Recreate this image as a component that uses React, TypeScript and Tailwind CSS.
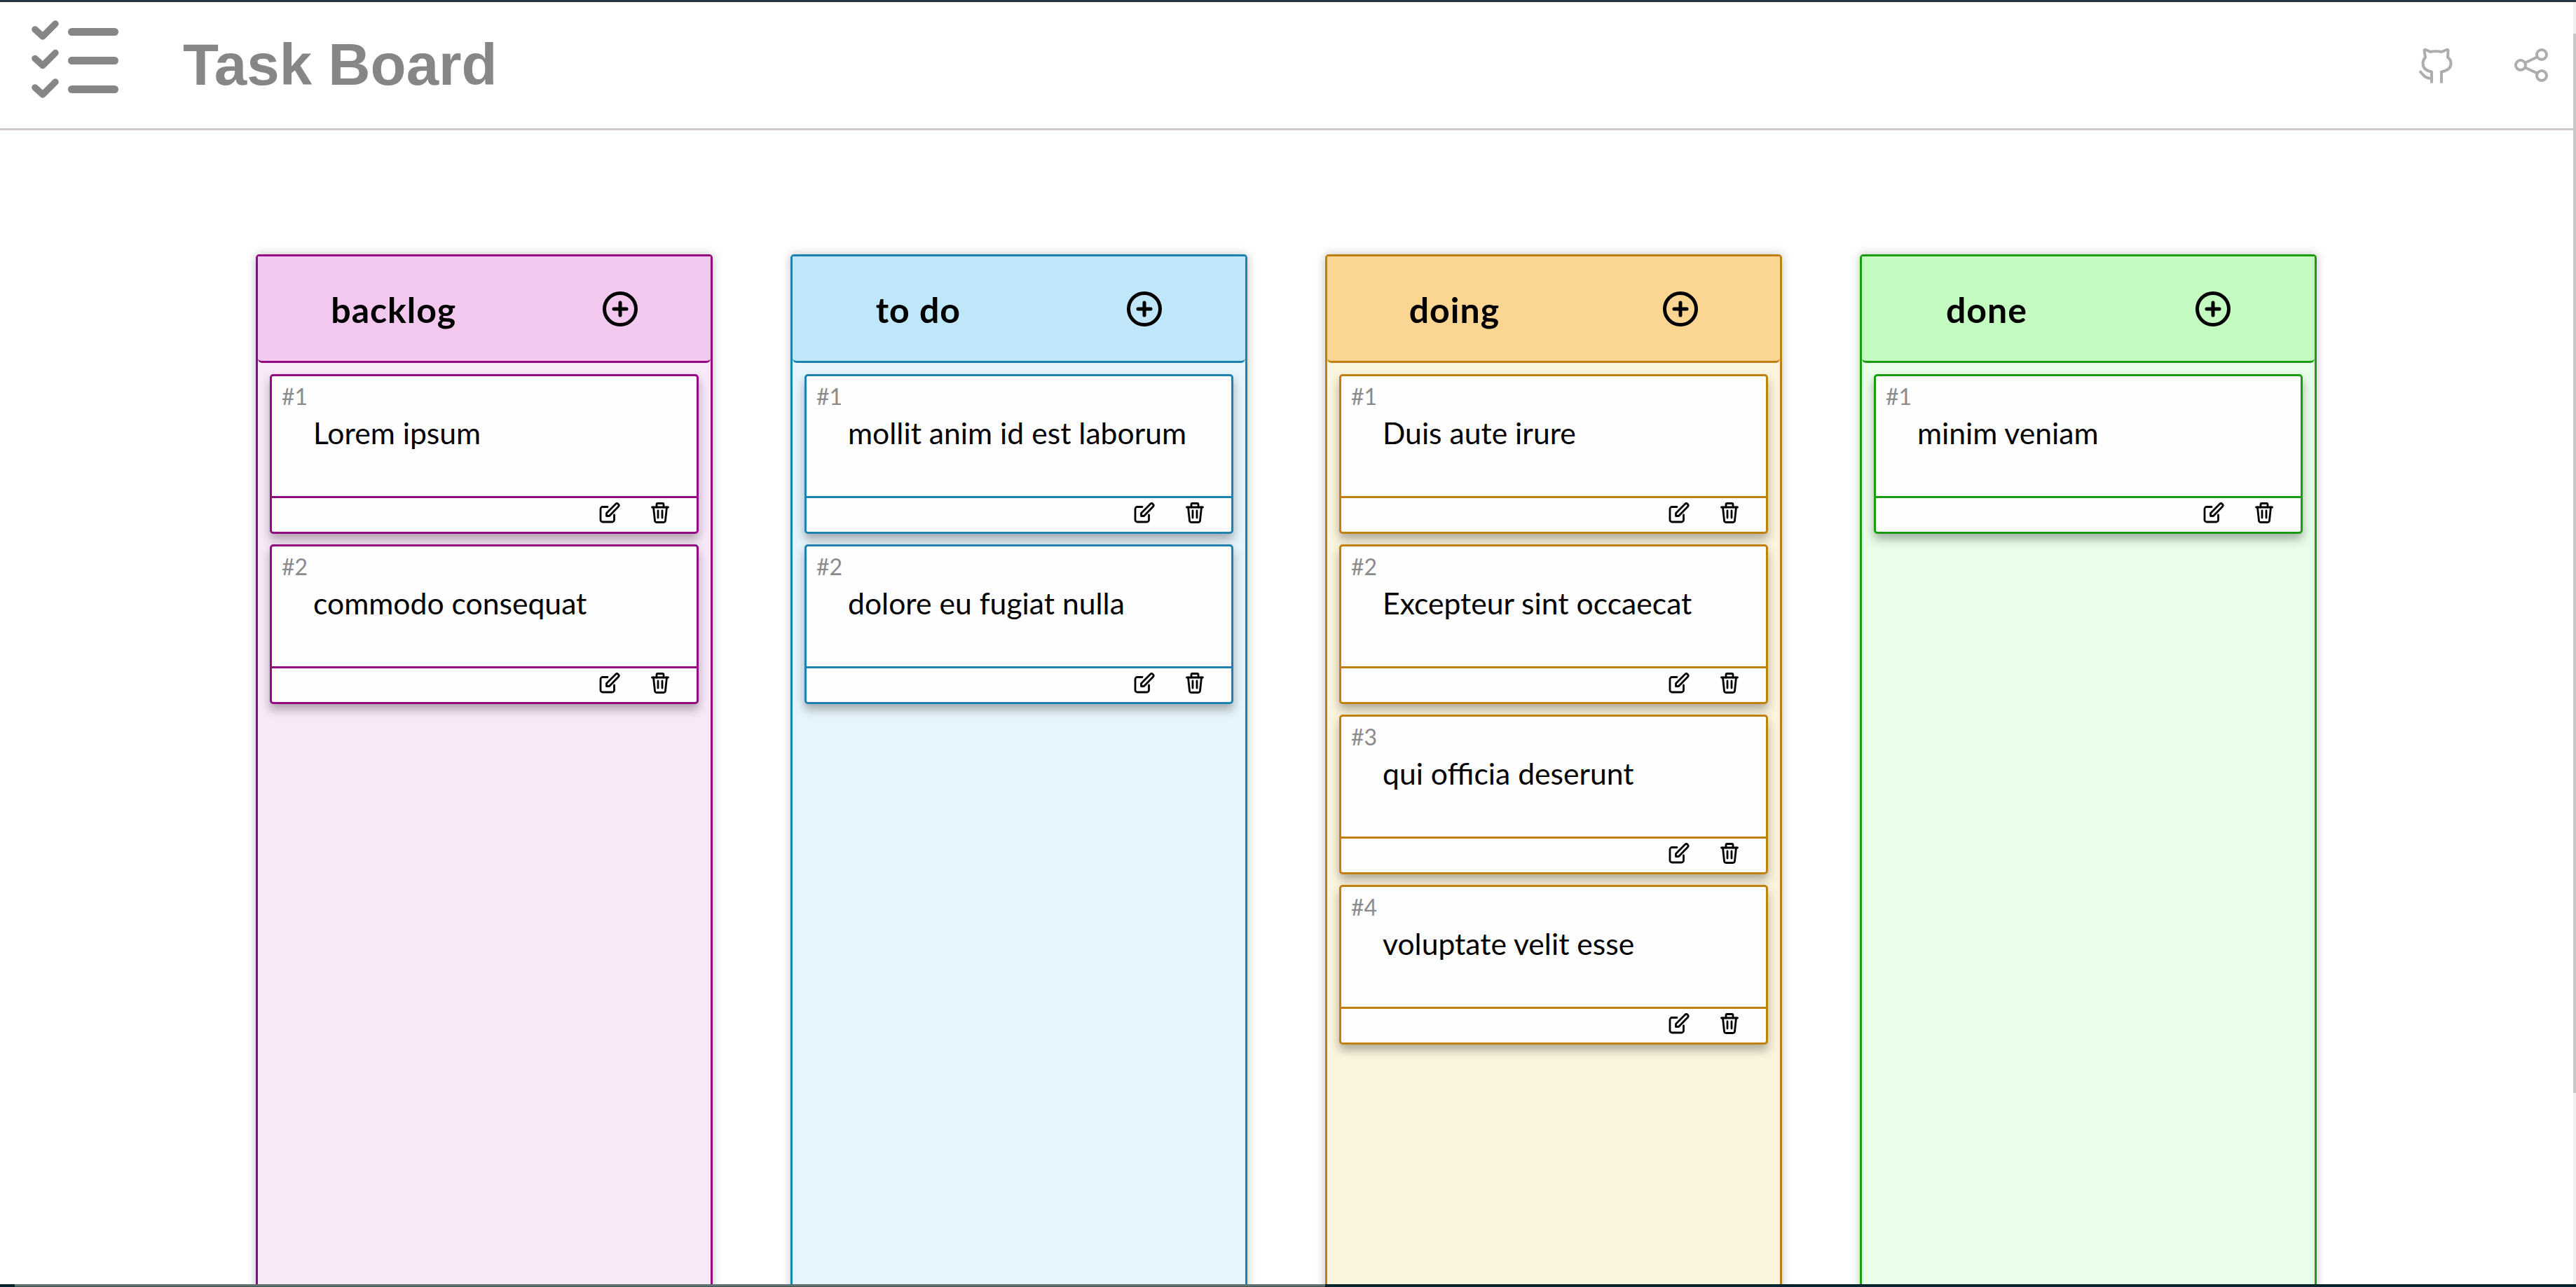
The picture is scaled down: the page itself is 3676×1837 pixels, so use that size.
const columns = [
  {
    title: "backlog",
    box: "border-[#930a80] bg-[#f9e8f8] shadow-[0_0_14px_rgba(0,0,0,0.25)]",
    head: "border-[#930a80] bg-[#f2c8ee]",
    card: "border-[#930a80]",
    line: "border-[#930a80]",
    tasks: ["Lorem ipsum", "commodo consequat"],
  },
  {
    title: "to do",
    box: "border-[#1e82b0] bg-[#e6f4fb] shadow-[0_0_14px_rgba(0,0,0,0.25)]",
    head: "border-[#1e82b0] bg-[#c0e7f9]",
    card: "border-[#1e82b0]",
    line: "border-[#1e82b0]",
    tasks: ["mollit anim id est laborum", "dolore eu fugiat nulla"],
  },
  {
    title: "doing",
    box: "border-[#c0800f] bg-[#fbf4de] shadow-[0_0_14px_rgba(0,0,0,0.25)]",
    head: "border-[#c0800f] bg-[#fbd692]",
    card: "border-[#c0800f]",
    line: "border-[#c0800f]",
    tasks: ["Duis aute irure", "Excepteur sint occaecat", "qui officia deserunt", "voluptate velit esse"],
  },
  {
    title: "done",
    box: "border-[#1a9c10] bg-[#e9fee8] shadow-[0_0_14px_rgba(0,0,0,0.25)]",
    head: "border-[#1a9c10] bg-[#c4fbc0]",
    card: "border-[#1a9c10]",
    line: "border-[#1a9c10]",
    tasks: ["minim veniam"],
  },
];

function Logo() {
  return (
    <svg width="130" height="138" viewBox="0 0 130 138" fill="none" stroke="#858687" strokeLinecap="round" strokeLinejoin="round">
      <path d="M8 18L19 28L37 10" strokeWidth="9.5" />
      <path d="M8 59.5L19 69.5L37 51.5" strokeWidth="9.5" />
      <path d="M8 101L19 111L37 93" strokeWidth="9.5" />
      <path d="M60.5 21.5H121.5" strokeWidth="11" />
      <path d="M60.5 62.5H121.5" strokeWidth="11" />
      <path d="M60.5 103.5H121.5" strokeWidth="11" />
    </svg>
  );
}

function GithubIcon() {
  return (
    <svg width="52" height="54" viewBox="0 0 52 54" fill="none" stroke="#adadad" strokeWidth="4" strokeLinecap="round" strokeLinejoin="round">
      <path d="M20 51V36.5C12 35 7.5 31 7.5 24.5C7.5 21 9 18 11 16L9.5 6C9.5 5 10.5 4.5 11.5 5L18 8C22 7 30 7 34 8L41.5 5C42.5 4.5 43.5 5 43.5 6L43 16C46 18 47.5 21 47.5 24.5C47.5 31 42 35 34 36.5V51" />
      <path d="M4 36.5C9 42 11 46 20 46" />
    </svg>
  );
}

function ShareIcon() {
  return (
    <svg width="48" height="48" viewBox="0 0 48 48" fill="none" stroke="#adadad" strokeWidth="4">
      <circle cx="39" cy="9" r="7" />
      <circle cx="9" cy="24" r="7" />
      <circle cx="39" cy="39" r="7" />
      <path d="M15.5 20.5L32.5 12.5M15.5 27.5L32.5 35.5" />
    </svg>
  );
}

function AddIcon() {
  return (
    <svg width="50" height="50" viewBox="0 0 50 50" fill="none" stroke="#000" strokeWidth="5" strokeLinecap="round">
      <circle cx="25" cy="25" r="22.5" />
      <path d="M16 25H34M25 16V34" />
    </svg>
  );
}

function EditIcon() {
  return (
    <svg width="30" height="30" viewBox="0 0 30 30" fill="none" stroke="#000" strokeWidth="2.8" strokeLinecap="round" strokeLinejoin="round">
      <path d="M12 6.5H5A3 3 0 0 0 2 9.5V25A3 3 0 0 0 5 28H18.5A3 3 0 0 0 21.5 25V18" />
      <path d="M10.5 19.5V15.5L23.5 2.5A2.6 2.6 0 0 1 27.3 6.2L14.5 19.5Z" />
    </svg>
  );
}

function TrashIcon() {
  return (
    <svg width="26" height="30" viewBox="0 0 26 30" fill="none" stroke="#000" strokeWidth="2.8" strokeLinecap="round" strokeLinejoin="round">
      <path d="M1.5 7H24.5" />
      <path d="M8 7V3A1.5 1.5 0 0 1 9.5 1.5H16.5A1.5 1.5 0 0 1 18 3V7" />
      <path d="M3.5 7L5.5 26A2.5 2.5 0 0 0 8 28.5H18A2.5 2.5 0 0 0 20.5 26L22.5 7" />
      <path d="M10 12V22M16 12V22" />
    </svg>
  );
}

function TaskCard({ index, text, card, line }: { index: number; text: string; card: string; line: string }) {
  return (
    <div className={`flex h-[228px] flex-col rounded-[5px] border-[3px] bg-[#fefefe] shadow-[0_8px_14px_rgba(0,0,0,0.3)] ${card}`}>
      <div className="h-[171px] pl-[14px] pt-[9px]">
        <p className="text-[32px] leading-[40px] text-[#8b8b8b]">#{index}</p>
        <p className="pl-[45px] pt-[3px] text-[42.67px] leading-[58px] text-black">{text}</p>
      </div>
      <div className={`flex flex-1 items-center justify-end gap-[44px] border-t-[3px] pb-[6px] pr-[39px] ${line}`}>
        <EditIcon />
        <TrashIcon />
      </div>
    </div>
  );
}

function Column({ column }: { column: (typeof columns)[number] }) {
  return (
    <section className={`h-[1600px] w-[652px] shrink-0 rounded-[5px] border-[3px] ${column.box}`}>
      <header className={`flex h-[152px] items-center justify-around rounded-b-[6px] border-b-[3px] ${column.head}`}>
        <h2 className="pt-[2px] text-[50px] font-bold leading-[60px] tracking-[1px] text-black">{column.title}</h2>
        <button>
          <AddIcon />
        </button>
      </header>
      <div className="flex flex-col gap-[15px] px-[17px] pt-[16px]">
        {column.tasks.map((text, i) => (
          <TaskCard key={text} index={i + 1} text={text} card={column.card} line={column.line} />
        ))}
      </div>
    </section>
  );
}

export default function App() {
  return (
    <div className="flex h-screen flex-col overflow-hidden bg-white font-['Lato',sans-serif]">
      <div className="h-[3px] shrink-0 bg-[#26353f]" />
      <div className="flex min-h-0 flex-1">
        <div className="flex min-w-0 flex-1 flex-col">
          <nav className="flex h-[183px] shrink-0 items-center border-b-[3px] border-[#cfc7c7] pl-[42px] pr-[36px]">
            <Logo />
            <h1 className="ml-[89px] font-['Liberation_Sans',sans-serif] text-[83.5px] font-bold leading-none text-[#858687]">
              Task Board
            </h1>
            <div className="ml-auto flex items-center gap-[86px]">
              <GithubIcon />
              <ShareIcon />
            </div>
          </nav>
          <main className="flex min-h-0 flex-1 gap-[111px] overflow-hidden pl-[365px] pt-[177px]">
            {columns.map((column) => (
              <Column key={column.title} column={column} />
            ))}
          </main>
        </div>
        <aside className="flex w-[4px] shrink-0 flex-col bg-[#f0f0f0]">
          <div className="h-[45px]" />
          <div className="h-[1512px] bg-[#c8c8c8]" />
        </aside>
      </div>
      <footer className="flex h-[4px] shrink-0 bg-[#07232d]">
        <div className="w-[21px]" />
        <div className="w-[1870px] border-b border-[#3f5553] bg-[#5f7270]" />
      </footer>
    </div>
  );
}
